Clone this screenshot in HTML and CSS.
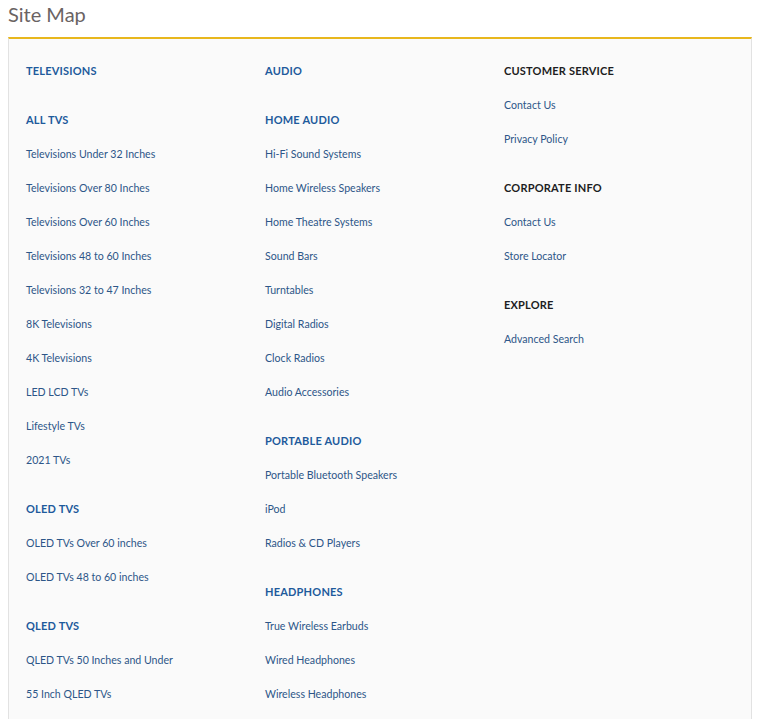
FILE: index.html
```html
<!DOCTYPE html>
<html lang="en">
<head>
<meta charset="utf-8">
<title>Site Map</title>
<link rel="stylesheet" href="styles.css">
</head>
<body>
<h1 class="page-title">Site Map</h1>
<div class="sitemap">
  <div class="col">
    <div class="head">TELEVISIONS</div>
    <div class="head">ALL TVS</div>
    <a class="link">Televisions Under 32 Inches</a>
    <a class="link">Televisions Over 80 Inches</a>
    <a class="link">Televisions Over 60 Inches</a>
    <a class="link">Televisions 48 to 60 Inches</a>
    <a class="link">Televisions 32 to 47 Inches</a>
    <a class="link">8K Televisions</a>
    <a class="link">4K Televisions</a>
    <a class="link">LED LCD TVs</a>
    <a class="link">Lifestyle TVs</a>
    <a class="link">2021 TVs</a>
    <div class="head">OLED TVS</div>
    <a class="link">OLED TVs Over 60 inches</a>
    <a class="link">OLED TVs 48 to 60 inches</a>
    <div class="head">QLED TVS</div>
    <a class="link">QLED TVs 50 Inches and Under</a>
    <a class="link">55 Inch QLED TVs</a>
  </div>
  <div class="col">
    <div class="head">AUDIO</div>
    <div class="head">HOME AUDIO</div>
    <a class="link">Hi-Fi Sound Systems</a>
    <a class="link">Home Wireless Speakers</a>
    <a class="link">Home Theatre Systems</a>
    <a class="link">Sound Bars</a>
    <a class="link">Turntables</a>
    <a class="link">Digital Radios</a>
    <a class="link">Clock Radios</a>
    <a class="link">Audio Accessories</a>
    <div class="head">PORTABLE AUDIO</div>
    <a class="link">Portable Bluetooth Speakers</a>
    <a class="link">iPod</a>
    <a class="link">Radios &amp; CD Players</a>
    <div class="head">HEADPHONES</div>
    <a class="link">True Wireless Earbuds</a>
    <a class="link">Wired Headphones</a>
    <a class="link">Wireless Headphones</a>
  </div>
  <div class="col">
    <div class="head dark">CUSTOMER SERVICE</div>
    <a class="link">Contact Us</a>
    <a class="link">Privacy Policy</a>
    <div class="head dark">CORPORATE INFO</div>
    <a class="link">Contact Us</a>
    <a class="link">Store Locator</a>
    <div class="head dark">EXPLORE</div>
    <a class="link">Advanced Search</a>
  </div>
</div>
</body>
</html>
```
FILE: styles.css
```css
html, body {
  margin: 0;
  padding: 0;
  background: #ffffff;
}
body {
  padding: 0 7px 0 8px;
  font-family: "Lato", "Liberation Sans", sans-serif;
}
.page-title {
  margin: 0;
  height: 37px;
  line-height: 28px;
  font-size: 20px;
  font-weight: 400;
  color: #6a6363;
}
.sitemap {
  border-top: 2px solid #e8b71d;
  border-left: 1px solid #e2e2e2;
  border-right: 1px solid #e2e2e2;
  background: #fafafa;
  display: grid;
  grid-template-columns: 239px 239px 239px;
  padding: 0 0 8px 17px;
  align-content: start;
}
.col {
  display: flex;
  flex-direction: column;
}
.head {
  height: 34px;
  line-height: 34px;
  margin-top: 15px;
  font-size: 11px;
  font-weight: 700;
  color: #1e5a9c;
  letter-spacing: 0.2px;
}
.head.dark {
  color: #1d1d22;
}
.link {
  height: 34px;
  line-height: 34px;
  font-size: 10.6px;
  color: #2d5688;
  text-decoration: none;
}
```
